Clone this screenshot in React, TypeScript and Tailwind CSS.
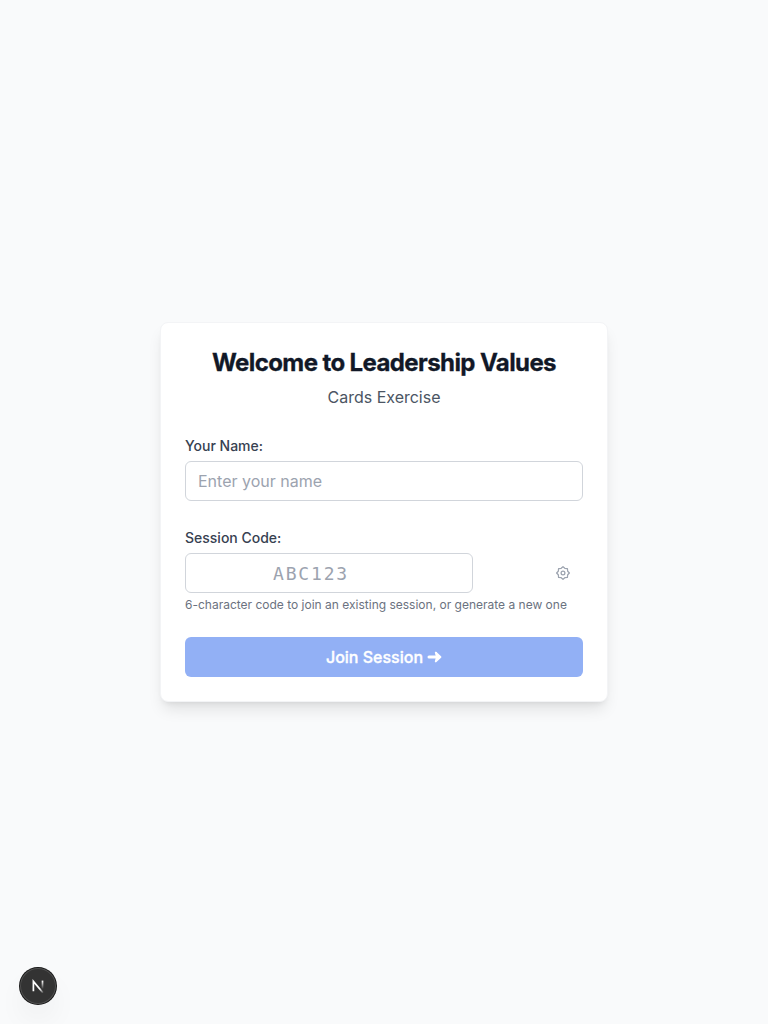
export default function App() {
  return (
    <main className="relative flex min-h-screen items-center justify-center bg-[#f9fafb] font-['Inter',sans-serif]">
      <section className="w-[448px] rounded-lg border border-[#f3f4f6] bg-white p-6 shadow-lg">
        <header className="flex flex-col gap-1.5 text-center">
          <h1 className="text-2xl font-bold tracking-tight text-[#111827] [-webkit-text-stroke:0.3px_#111827]">Welcome to Leadership Values</h1>
          <p className="text-base text-[#4b5563]">Cards Exercise</p>
        </header>
        <form className="pt-[27px]" onSubmit={(e) => e.preventDefault()}>
          <label htmlFor="name" className="block text-sm font-medium text-[#374151]">Your Name:</label>
          <input
            id="name"
            placeholder="Enter your name"
            className="mt-[5px] block h-10 w-full rounded-md border border-[#d1d5db] bg-white px-3 text-base placeholder:text-[#9ca3af]"
          />
          <label htmlFor="code" className="mt-[27px] block text-sm font-medium text-[#374151]">Session Code:</label>
          <div className="mt-[5px] flex items-center justify-between">
            <input
              id="code"
              placeholder="ABC123"
              className="block h-10 w-72 rounded-md border border-[#d1d5db] bg-white pr-12 pl-3 text-center font-['DejaVu_Sans_Mono',monospace] text-lg tracking-widest placeholder:text-[#9ca3af]"
            />
            <button type="button" aria-label="Generate code" className="mr-3 flex h-10 w-4 items-center justify-center text-[#9ca3af]">
              <svg width="16" height="16" viewBox="-8 -8 16 16" fill="none" stroke="currentColor" strokeWidth="1.25" strokeLinejoin="round">
                <path d="M0-6.4 1.8-4.7 4.4-4.4 4.7-1.8 6.4 0 4.7 1.8 4.4 4.4 1.8 4.7 0 6.4-1.8 4.7-4.4 4.4-4.7 1.8-6.4 0-4.7-1.8-4.4-4.4-1.8-4.7Z" />
                <circle r="1.9" />
              </svg>
            </button>
          </div>
          <p className="mt-1 text-xs text-[#6b7280]">6-character code to join an existing session, or generate a new one</p>
          <button type="submit" className="mt-6 flex h-10 w-full items-center justify-center gap-1 rounded-md bg-[#92b0f5] text-base font-medium text-white">
            <span className="[-webkit-text-stroke:0.35px_#fff]">Join Session</span>
            <svg width="15" height="14" viewBox="0 0 15 14" fill="none" stroke="#fff" strokeLinecap="round" strokeLinejoin="round">
              <path d="M2 7H11" strokeWidth="3" />
              <path d="M8.8 2.6 13.4 7 8.8 11.4 10 7Z" fill="#fff" strokeWidth="2" />
            </svg>
          </button>
        </form>
      </section>
      <div className="absolute bottom-5 left-5 flex size-9 items-center justify-center rounded-full bg-[#333] shadow-[0_0_0_1px_#171717,inset_0_0_0_1px_rgba(255,255,255,0.14),0_16px_32px_-8px_rgba(0,0,0,0.14)]">
        <svg width="14" height="14" viewBox="0 0 14 14" fill="none" strokeWidth="1.7">
          <defs>
            <linearGradient id="diag" x1="9" y1="9.5" x2="13" y2="14" gradientUnits="userSpaceOnUse">
              <stop stopColor="#fff" />
              <stop offset="1" stopColor="#fff" stopOpacity="0" />
            </linearGradient>
            <linearGradient id="stem" x1="11" y1="2" x2="11" y2="10" gradientUnits="userSpaceOnUse">
              <stop stopColor="#fff" />
              <stop offset="1" stopColor="#fff" stopOpacity="0" />
            </linearGradient>
          </defs>
          <path d="M2.4 12.2V2.4L12 13.8" stroke="url(#diag)" />
          <path d="M11.5 1.6v8.8" stroke="url(#stem)" />
        </svg>
      </div>
    </main>
  );
}
